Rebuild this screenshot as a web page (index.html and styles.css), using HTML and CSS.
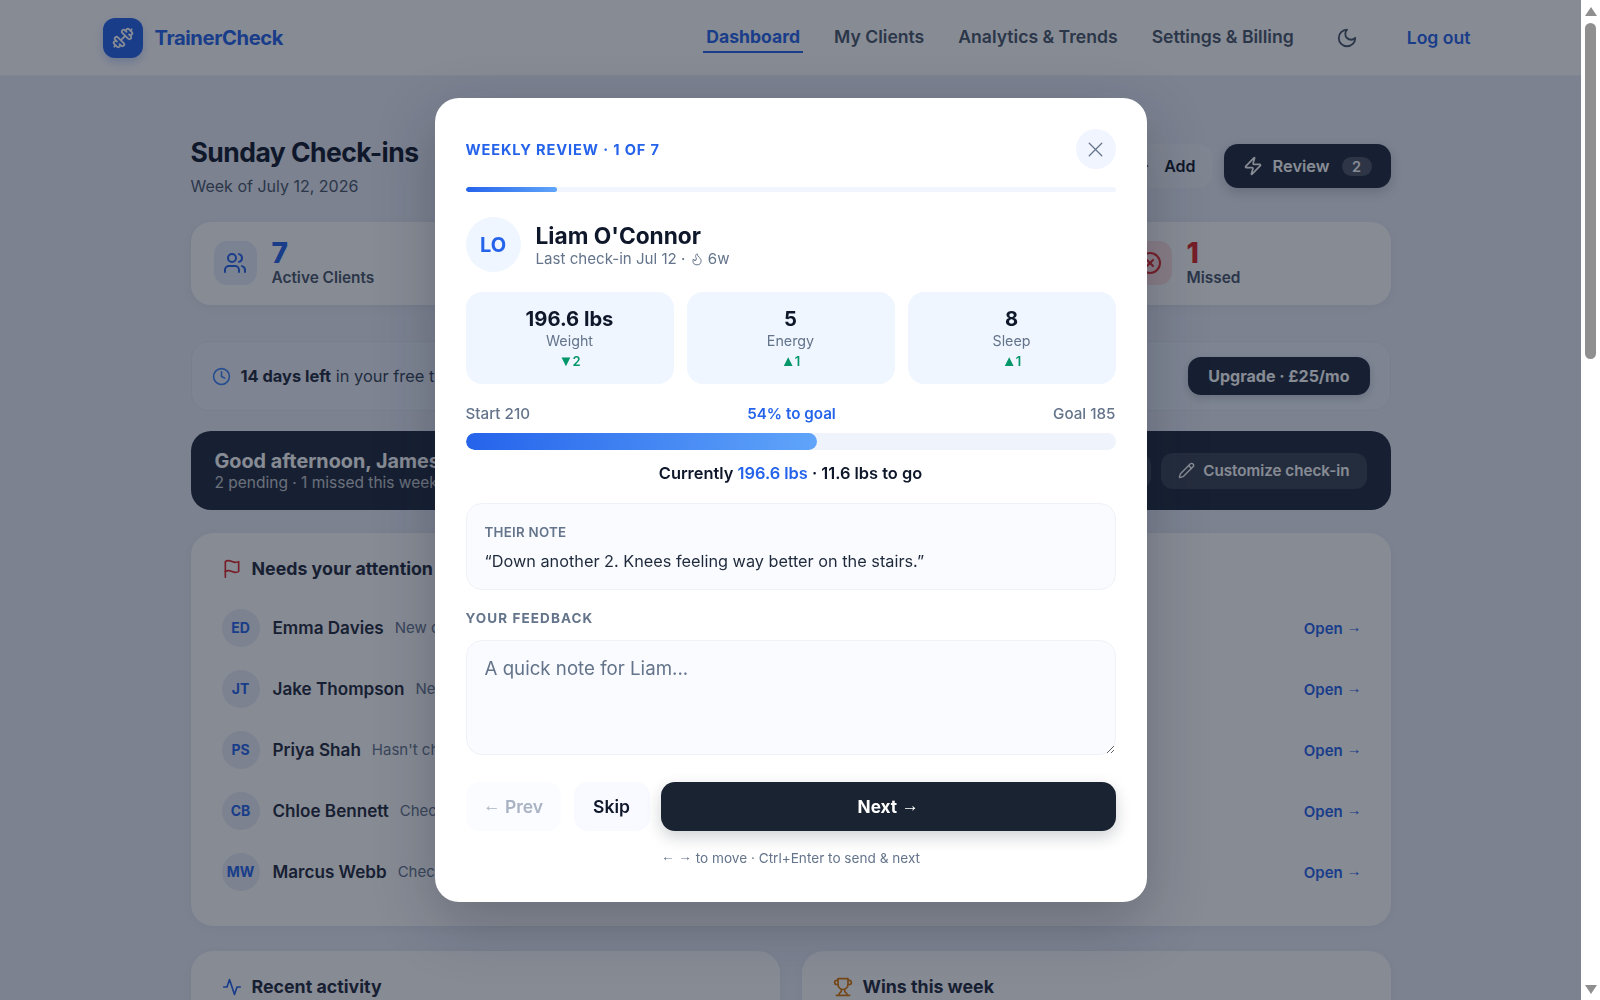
FILE: index.html
```html
<!DOCTYPE html>
<html lang="en">
<head>
<meta charset="utf-8">
<title>TrainerCheck</title>
<link rel="stylesheet" href="styles.css">
</head>
<body>
<svg class="sprite" width="0" height="0" aria-hidden="true">
  <symbol id="i-dumbbell" viewBox="0 0 24 24"><path d="M17.596 12.768a2 2 0 1 0 2.829-2.829l-1.768-1.767a2 2 0 0 0 2.828-2.829l-2.828-2.828a2 2 0 0 0-2.829 2.828l-1.767-1.768a2 2 0 1 0-2.829 2.829z"/><path d="m2.5 21.5 1.4-1.4"/><path d="m20.1 3.9 1.4-1.4"/><path d="M5.343 21.485a2 2 0 1 0 2.829-2.828l1.767 1.768a2 2 0 1 0 2.829-2.829l-6.364-6.364a2 2 0 1 0-2.829 2.829l1.768 1.767a2 2 0 0 0-2.828 2.829z"/><path d="m9.6 14.4 4.8-4.8"/></symbol>
  <symbol id="i-users" viewBox="0 0 24 24"><path d="M16 21v-2a4 4 0 0 0-4-4H6a4 4 0 0 0-4 4v2"/><circle cx="9" cy="7" r="4"/><path d="M22 21v-2a4 4 0 0 0-3-3.87"/><path d="M16 3.13a4 4 0 0 1 0 7.75"/></symbol>
  <symbol id="i-check" viewBox="0 0 24 24"><circle cx="12" cy="12" r="10"/><path d="m9 12 2 2 4-4"/></symbol>
  <symbol id="i-clock" viewBox="0 0 24 24"><circle cx="12" cy="12" r="10"/><polyline points="12 6 12 12 16 14"/></symbol>
  <symbol id="i-circle-x" viewBox="0 0 24 24"><circle cx="12" cy="12" r="10"/><path d="m15 9-6 6"/><path d="m9 9 6 6"/></symbol>
  <symbol id="i-moon" viewBox="0 0 24 24"><path d="M12 3a6 6 0 0 0 9 9 9 9 0 1 1-9-9Z"/></symbol>
  <symbol id="i-x" viewBox="0 0 24 24"><path d="M18 6 6 18"/><path d="m6 6 12 12"/></symbol>
  <symbol id="i-plus" viewBox="0 0 24 24"><path d="M5 12h14"/><path d="M12 5v14"/></symbol>
  <symbol id="i-zap" viewBox="0 0 24 24"><path d="M4 14a1 1 0 0 1-.78-1.63l9.9-10.2a.5.5 0 0 1 .86.46l-1.92 6.02A1 1 0 0 0 13 10h7a1 1 0 0 1 .78 1.63l-9.9 10.2a.5.5 0 0 1-.86-.46l1.92-6.02A1 1 0 0 0 11 14z"/></symbol>
  <symbol id="i-pencil" viewBox="0 0 24 24"><path d="M21.174 6.812a1 1 0 0 0-3.986-3.987L3.842 16.174a2 2 0 0 0-.5.83l-1.321 4.352a.5.5 0 0 0 .623.622l4.353-1.32a2 2 0 0 0 .83-.497z"/><path d="m15 5 4 4"/></symbol>
  <symbol id="i-flag" viewBox="0 0 24 24"><path d="M4 15s1-1 4-1 5 2 8 2 4-1 4-1V3s-1 1-4 1-5-2-8-2-4 1-4 1z"/><line x1="4" y1="22" x2="4" y2="15"/></symbol>
  <symbol id="i-activity" viewBox="0 0 24 24"><polyline points="22 12 18 12 15 21 9 3 6 12 2 12"/></symbol>
  <symbol id="i-trophy" viewBox="0 0 24 24"><path d="M6 9H4.5a2.5 2.5 0 0 1 0-5H6"/><path d="M18 9h1.5a2.5 2.5 0 0 0 0-5H18"/><path d="M4 22h16"/><path d="M10 14.66V17c0 .55-.47.98-.97 1.21C7.85 18.75 7 20.24 7 22"/><path d="M14 14.66V17c0 .55.47.98.97 1.21C16.15 18.75 17 20.24 17 22"/><path d="M18 2H6v7a6 6 0 0 0 12 0V2Z"/></symbol>
  <symbol id="i-flame" viewBox="0 0 24 24"><path d="M8.5 14.5A2.5 2.5 0 0 0 11 12c0-1.38-.5-2-1-3-1.072-2.143-.224-4.054 2-6 .5 2.5 2 4.9 4 6.5 2 1.6 3 3.5 3 5.5a7 7 0 1 1-14 0c0-1.153.433-2.294 1-3a2.5 2.5 0 0 0 2.5 2.5z"/></symbol>
</svg>

<div class="app">
  <div class="viewport">
    <div class="scroller">
      <header class="topbar">
        <div class="topbar-inner">
          <a class="brand" href="#">
            <span class="brand-mark"><svg class="ico ico-22"><use href="#i-dumbbell"/></svg></span>
            <span class="brand-name">TrainerCheck</span>
          </a>
          <nav class="nav">
            <a class="nav-link is-active" href="#">Dashboard</a>
            <a class="nav-link" href="#">My Clients</a>
            <a class="nav-link" href="#">Analytics &amp; Trends</a>
            <a class="nav-link" href="#">Settings &amp; Billing</a>
            <span class="nav-moon"><svg class="ico ico-22"><use href="#i-moon"/></svg></span>
            <a class="nav-logout" href="#">Log out</a>
          </nav>
        </div>
      </header>

      <main class="page">
        <section class="page-head">
          <div>
            <h1 class="page-title">Sunday Check-ins</h1>
            <p class="page-sub">Week of July 12, 2026</p>
          </div>
          <div class="page-actions">
            <button class="btn-add"><svg class="ico ico-16"><use href="#i-plus"/></svg>Add</button>
            <button class="btn-review"><svg class="ico ico-20"><use href="#i-zap"/></svg>Review<span class="review-count">2</span></button>
          </div>
        </section>

        <section class="stats">
          <div class="stat">
            <span class="stat-icon tint-blue"><svg class="ico ico-24"><use href="#i-users"/></svg></span>
            <div><div class="stat-num c-blue">7</div><div class="stat-label">Active Clients</div></div>
          </div>
          <div class="stat">
            <span class="stat-icon tint-green"><svg class="ico ico-24"><use href="#i-check"/></svg></span>
            <div><div class="stat-num c-green">4</div><div class="stat-label">Checked In</div></div>
          </div>
          <div class="stat">
            <span class="stat-icon tint-amber"><svg class="ico ico-24"><use href="#i-clock"/></svg></span>
            <div><div class="stat-num c-amber">2</div><div class="stat-label">Pending</div></div>
          </div>
          <div class="stat">
            <span class="stat-icon tint-red"><svg class="ico ico-24"><use href="#i-circle-x"/></svg></span>
            <div><div class="stat-num c-red">1</div><div class="stat-label">Missed</div></div>
          </div>
        </section>

        <section class="trial">
          <svg class="ico ico-19 c-blue2"><use href="#i-clock"/></svg>
          <p class="trial-text"><strong>14 days left</strong> in your free trial</p>
          <button class="btn-upgrade">Upgrade · £25/mo</button>
        </section>

        <section class="hello">
          <div class="hello-copy">
            <div class="hello-title">Good afternoon, James</div>
            <div class="hello-sub">2 pending · 1 missed this week</div>
          </div>
          <div class="hello-actions">
            <button class="hello-btn">Copy check-in link</button>
            <button class="hello-btn"><svg class="ico ico-17"><use href="#i-pencil"/></svg>Customize check-in</button>
          </div>
        </section>

        <section class="card attention">
          <h2 class="card-title"><svg class="ico ico-20 c-red"><use href="#i-flag"/></svg>Needs your attention</h2>
          <ul class="rows">
            <li class="row"><span class="row-av">ED</span><span class="row-name">Emma Davies</span><span class="row-note">New check-in to review</span><a class="row-open" href="#">Open <span class="sym arw">→</span></a></li>
            <li class="row"><span class="row-av">JT</span><span class="row-name">Jake Thompson</span><span class="row-note">New check-in to review</span><a class="row-open" href="#">Open <span class="sym arw">→</span></a></li>
            <li class="row"><span class="row-av">PS</span><span class="row-name">Priya Shah</span><span class="row-note">Hasn't checked in this week</span><a class="row-open" href="#">Open <span class="sym arw">→</span></a></li>
            <li class="row"><span class="row-av">CB</span><span class="row-name">Chloe Bennett</span><span class="row-note">Check-in due today</span><a class="row-open" href="#">Open <span class="sym arw">→</span></a></li>
            <li class="row"><span class="row-av">MW</span><span class="row-name">Marcus Webb</span><span class="row-note">Check-in due today</span><a class="row-open" href="#">Open <span class="sym arw">→</span></a></li>
          </ul>
        </section>

        <section class="two-up">
          <div class="card tall">
            <h2 class="card-title"><svg class="ico ico-20 c-blue"><use href="#i-activity"/></svg>Recent activity</h2>
          </div>
          <div class="card tall">
            <h2 class="card-title"><svg class="ico ico-20 c-amber"><use href="#i-trophy"/></svg>Wins this week</h2>
          </div>
        </section>
      </main>
    </div>

    <div class="overlay">
      <div class="modal">
        <div class="modal-head">
          <span class="eyebrow">WEEKLY REVIEW · 1 OF 7</span>
          <button class="close" aria-label="Close"><svg class="ico"><use href="#i-x"/></svg></button>
        </div>
        <div class="step-track"><div class="step-fill"></div></div>

        <div class="person">
          <span class="person-av">LO</span>
          <div>
            <div class="person-name">Liam O'Connor</div>
            <div class="person-meta">Last check-in Jul 12 · <svg class="ico ico-14"><use href="#i-flame"/></svg> 6w</div>
          </div>
        </div>

        <div class="tiles">
          <div class="tile"><div class="tile-val">196.6 lbs</div><div class="tile-label">Weight</div><div class="tile-delta"><span class="sym tri">▼</span>2</div></div>
          <div class="tile"><div class="tile-val">5</div><div class="tile-label">Energy</div><div class="tile-delta"><span class="sym tri">▲</span>1</div></div>
          <div class="tile"><div class="tile-val">8</div><div class="tile-label">Sleep</div><div class="tile-delta"><span class="sym tri">▲</span>1</div></div>
        </div>

        <div class="goal-row"><span>Start 210</span><span class="goal-mid">54% to goal</span><span>Goal 185</span></div>
        <div class="goal-track"><div class="goal-fill"></div></div>
        <p class="goal-now">Currently <span class="goal-cur">196.6 lbs</span> · 11.6 lbs to go</p>

        <div class="note">
          <div class="note-label">THEIR NOTE</div>
          <p class="note-text">“Down another 2. Knees feeling way better on the stairs.”</p>
        </div>

        <label class="fb-label" for="fb">YOUR FEEDBACK</label>
        <textarea class="fb" id="fb" placeholder="A quick note for Liam..."></textarea>

        <div class="modal-actions">
          <button class="btn-prev"><span class="sym arw">←</span> Prev</button>
          <button class="btn-skip">Skip</button>
          <button class="btn-next">Next <span class="sym arw">→</span></button>
        </div>
        <p class="hint"><span class="sym arw">← →</span> to move · Ctrl+Enter to send &amp; next</p>
      </div>
    </div>
  </div>

  <div class="scrollbar" aria-hidden="true">
    <div class="sb-btn sb-up"><svg class="sb-arrow" viewBox="0 0 12 9"><polygon points="6 0 12 9 0 9"/></svg></div>
    <div class="sb-track"><div class="sb-thumb"></div></div>
    <div class="sb-btn sb-down"><svg class="sb-arrow" viewBox="0 0 12 9"><polygon points="0 0 12 0 6 9"/></svg></div>
  </div>
</div>
</body>
</html>
```
FILE: styles.css
```css
* { box-sizing: border-box; }
html, body { margin: 0; padding: 0; height: 100%; overflow: hidden; }
body {
  font-family: "Inter", "Liberation Sans", sans-serif;
  background: #fff;
  color: #0f172a;
}
button, textarea { font-family: inherit; }
a { text-decoration: none; color: inherit; }
.sprite { position: absolute; }
.sym { font-family: "Liberation Sans", sans-serif; }
.arw { vertical-align: .12em; }
.tri { font-size: 15px; letter-spacing: -1px; }
.ico { fill: none; stroke: currentColor; stroke-width: 2; stroke-linecap: round; stroke-linejoin: round; flex: none; }
.ico-14 { width: 14px; height: 14px; vertical-align: -2px; stroke-width: 1.7; }
.ico-16 { width: 16px; height: 16px; }
.ico-17 { width: 17px; height: 17px; }
.ico-19 { width: 19px; height: 19px; }
.ico-20 { width: 20px; height: 20px; }
.ico-22 { width: 22px; height: 22px; }
.ico-24 { width: 24px; height: 24px; }
.c-blue { color: #2563eb; }
.c-blue2 { color: #3b82f6; }
.c-green { color: #059669; }
.c-amber { color: #d97706; }
.c-red { color: #dc2626; }

.app { display: flex; height: 100%; }
.viewport { flex: 1; min-width: 0; position: relative; overflow: hidden; }
.scroller { height: 100%; overflow: hidden; background: #e9ecf6; }
.scrollbar { width: 19px; display: flex; flex-direction: column; background: #fff; }
.sb-btn { height: 23px; display: flex; justify-content: center; flex: none; }
.sb-up { align-items: flex-start; padding-top: 7px; }
.sb-down { align-items: flex-end; padding-bottom: 6px; }
.sb-arrow { width: 12px; height: 9px; fill: #8f8f8f; }
.sb-track { flex: 1; padding-left: 4px; }
.sb-thumb { width: 11px; height: 336px; border-radius: 6px; background: #8f8f8f; }

.topbar { height: 76px; background: #fff; border-bottom: 1px solid #f1f5f9; }
.topbar-inner { max-width: 1400px; height: 100%; margin: 0 auto; padding: 0 12px; display: flex; align-items: center; justify-content: space-between; }
.brand { display: flex; align-items: center; gap: 12px; }
.brand-mark { width: 40px; height: 40px; border-radius: 12px; background: #2563eb; color: #fff; display: flex; align-items: center; justify-content: center; box-shadow: 0 4px 10px rgba(37,99,235,.25); }
.brand-name { font-size: 20.2px; font-weight: 700; letter-spacing: -.02em; color: #2563eb; }
.nav { display: flex; align-items: center; }
.nav-link { font-size: 17.6px; font-weight: 600; color: #475569; padding: 4px 3px; margin-right: 28px; border-bottom: 2px solid transparent; }
.nav-link.is-active { color: #2563eb; border-bottom-color: #2563eb; font-weight: 700; }
.nav-moon { color: #475569; display: flex; margin-right: 49px; margin-left: 11px; }
.nav-logout { font-size: 17.6px; font-weight: 600; color: #2563eb; margin-right: 8px; }

.page { width: 1200px; margin: 0 auto; padding-top: 60px; }
.page-head { display: flex; justify-content: space-between; align-items: flex-start; }
.page-title { margin: 0; font-size: 26.5px; line-height: 32px; font-weight: 700; letter-spacing: -.02em; color: #0f172a; }
.page-sub { margin: 6px 0 0; font-size: 16px; line-height: 24px; color: #475569; }
.page-actions { display: flex; gap: 12px; margin-top: 8px; }
.btn-add { height: 44px; padding: 0 16px; display: flex; align-items: center; gap: 13px; border: 0; border-radius: 14px; background: rgba(255,255,255,.3); font-size: 16px; font-weight: 600; color: #0f172a; }
.btn-review { height: 44px; padding: 0 19px; display: flex; align-items: center; gap: 10px; border: 0; border-radius: 14px; background: #1e293b; color: #fff; font-size: 16.4px; font-weight: 600; box-shadow: 0 4px 12px rgba(15,23,42,.2); }
.review-count { min-width: 30px; height: 19px; margin-left: 2px; border-radius: 10px; background: rgba(255,255,255,.2); font-size: 14.5px; line-height: 19px; text-align: center; }

.stats { display: grid; grid-template-columns: repeat(4, 1fr); gap: 20px; margin-top: 24px; }
.stat { height: 83px; padding: 0 23px 2px; display: flex; align-items: center; gap: 15px; background: rgba(255,255,255,.92); border-radius: 20px; box-shadow: 0 2px 10px rgba(15,23,42,.05); }
.stat-icon { width: 43px; height: 44px; border-radius: 13px; display: flex; align-items: center; justify-content: center; }
.tint-blue { background: #e6eefc; color: #2563eb; }
.tint-green { background: #dcfce7; color: #059669; }
.tint-amber { background: #fef3c7; color: #d97706; }
.tint-red { background: #fee2e2; color: #dc2626; }
.stat-num { font-size: 28px; line-height: 30px; font-weight: 800; }
.stat-label { font-size: 15.4px; line-height: 20px; font-weight: 600; color: #475569; }

.trial { height: 70px; margin-top: 36px; padding: 0 20px; display: flex; align-items: center; gap: 10px; background: #ecf1fb; border: 1px solid #dfe6f2; border-radius: 18px; }
.trial-text { flex: 1; margin: 0; font-size: 16.4px; color: #334155; }
.trial-text strong { font-weight: 700; color: #1e293b; }
.btn-upgrade { height: 38px; padding: 0 20px; border: 0; border-radius: 13px; background: #1e293b; color: #fff; font-size: 16px; font-weight: 700; box-shadow: 0 3px 8px rgba(15,23,42,.2); }

.hello { height: 79px; margin-top: 20px; padding: 0 24px; display: flex; align-items: center; justify-content: space-between; background: #1e293b; border-radius: 20px; }
.hello-title { font-size: 19.8px; line-height: 24px; font-weight: 700; color: #fff; }
.hello-sub { font-size: 15.5px; line-height: 20px; color: rgba(255,255,255,.75); }
.hello-actions { display: flex; gap: 10px; }
.hello-btn { height: 36px; padding: 0 17px; display: flex; align-items: center; gap: 8px; border: 0; border-radius: 12px; background: rgba(255,255,255,.12); color: #fff; font-size: 15.2px; font-weight: 600; }

.card { background: rgba(255,255,255,.92); border-radius: 22px; padding: 24px 31px; box-shadow: 0 2px 10px rgba(15,23,42,.04); }
.card-title { margin: 0; display: flex; align-items: center; gap: 10px; font-size: 17.8px; line-height: 24px; font-weight: 700; color: #1e293b; }
.attention { height: 393px; margin-top: 23px; }
.rows { list-style: none; margin: 16px 0 0; padding: 0; }
.row { height: 61px; display: flex; align-items: center; }
.row-av { width: 38px; height: 38px; border-radius: 50%; background: #e8ecf4; color: #2563eb; font-size: 14px; font-weight: 700; display: flex; align-items: center; justify-content: center; margin-right: 13px; }
.row-name { font-size: 17.1px; font-weight: 600; color: #1e293b; margin-right: 11px; }
.row-note { flex: 1; font-size: 15px; color: #64748b; }
.row-open { font-size: 15px; font-weight: 600; color: #2563eb; margin-right: -2px; }
.two-up { display: grid; grid-template-columns: 1fr 1fr; gap: 22px; margin-top: 25px; }
.tall { height: 400px; }

.overlay { position: absolute; inset: 0; display: flex; align-items: center; justify-content: center; background: rgba(15,23,42,.5); backdrop-filter: blur(.7px); }
.modal { width: 712px; height: 804px; padding: 30px 31px; background: #fff; border-radius: 24px; box-shadow: 0 20px 60px rgba(15,23,42,.25); }
.modal-head { height: 40px; display: flex; align-items: center; justify-content: space-between; margin-top: 1px; }
.eyebrow { padding-top: 1px; font-size: 14.6px; font-weight: 700; letter-spacing: .06em; color: #2563eb; }
.close { width: 40px; height: 40px; padding: 0; border: 0; border-radius: 50%; background: #f1f5ff; color: #64748b; display: flex; align-items: center; justify-content: center; }
.close .ico { width: 25px; height: 25px; stroke-width: 1.25; }
.step-track { height: 5px; margin-top: 18px; border-radius: 3px; background: #f1f5fd; overflow: hidden; }
.step-fill { width: 14%; height: 100%; border-radius: 3px; background: linear-gradient(90deg, #2563eb, #60a5fa); }
.person { display: flex; align-items: center; gap: 15px; margin-top: 25px; }
.person-av { width: 55px; height: 55px; border-radius: 50%; background: #eff6ff; color: #2563eb; font-size: 20px; font-weight: 700; display: flex; align-items: center; justify-content: center; }
.person-name { font-size: 22.7px; line-height: 28px; font-weight: 700; color: #0f172a; }
.person-meta { font-size: 15.1px; line-height: 18px; color: #64748b; }
.tiles { display: grid; grid-template-columns: repeat(3, 1fr); gap: 13px; margin-top: 20px; }
.tile { height: 92px; padding-top: 15px; background: #eff6ff; border-radius: 16px; text-align: center; }
.tile-val { font-size: 20.2px; line-height: 24px; font-weight: 700; color: #0f172a; }
.tile-label { font-size: 14.3px; line-height: 20px; color: #64748b; }
.tile-delta { font-size: 13px; line-height: 20px; font-weight: 600; color: #059669; }
.goal-row { display: flex; justify-content: space-between; margin-top: 20px; font-size: 15.2px; line-height: 20px; font-weight: 500; color: #64748b; }
.goal-mid { color: #2563eb; font-weight: 600; }
.goal-track { height: 17px; margin-top: 9px; border-radius: 9px; background: #eff3fb; overflow: hidden; }
.goal-fill { width: 54%; height: 100%; border-radius: 9px; background: linear-gradient(90deg, #2563eb, #60a5fa); }
.goal-now { margin: 13px 0 0; text-align: center; font-size: 16.4px; line-height: 20px; font-weight: 600; color: #0f172a; }
.goal-cur { color: #2563eb; }
.note { height: 87px; margin-top: 20px; padding: 19px 18px 0; background: #fafbff; border: 1px solid #eef2f7; border-radius: 16px; }
.note-label { font-size: 13.3px; line-height: 18px; font-weight: 600; letter-spacing: .02em; color: #64748b; }
.note-text { margin: 10px 0 0; font-size: 16.3px; line-height: 20px; color: #1e293b; }
.fb-label { display: block; margin-top: 19px; font-size: 13.5px; line-height: 18px; font-weight: 700; letter-spacing: .08em; color: #64748b; }
.fb { display: block; width: 100%; height: 115px; margin-top: 13px; padding: 16px 18px; resize: vertical; background: #fafbff; border: 1px solid #eef2f7; border-radius: 16px; font-size: 18.7px; line-height: 24px; color: #0f172a; outline: 0; }
.fb::placeholder { color: #64748b; opacity: 1; }
.modal-actions { display: flex; gap: 13px; margin-top: 27px; }
.modal-actions button { height: 49px; border: 0; border-radius: 14px; font-size: 17.5px; font-weight: 600; }
.btn-prev { width: 95px; background: #fbfcff; color: #a9b3c3; }
.modal-actions .btn-skip { width: 76px; margin-right: -2px; background: #f8faff; color: #0f172a; }
.modal-actions .btn-next { flex: 1; background: #1a2332; color: #fff; font-size: 17.2px; font-weight: 700; box-shadow: 0 6px 16px rgba(15,23,42,.2); }
.hint { margin: 17px 0 0; text-align: center; font-size: 13.6px; line-height: 18px; color: #64748b; }
```
